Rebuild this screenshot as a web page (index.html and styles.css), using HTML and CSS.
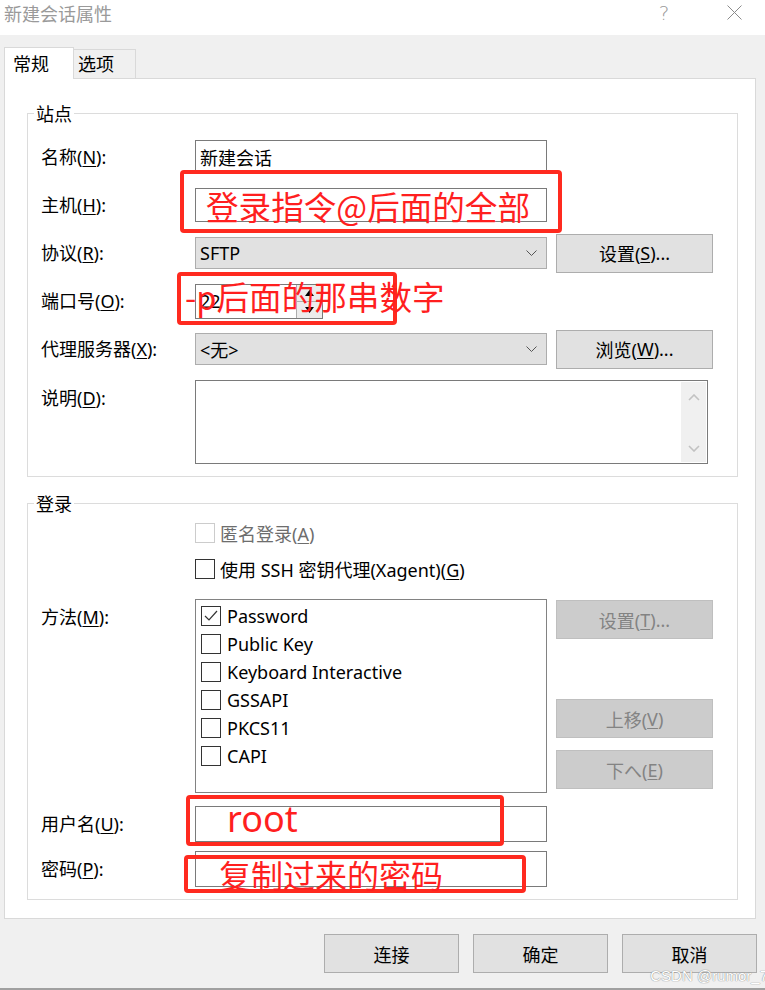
FILE: index.html
```html
<!DOCTYPE html>
<html lang="zh-CN">
<head>
<meta charset="utf-8">
<title>新建会话属性</title>
<link rel="stylesheet" href="styles.css">
</head>
<body>
<div class="window">
  <div class="titlebar">
    <span class="title">新建会话属性</span>
    <span class="help">?</span>
    <svg class="close" width="15" height="15" viewBox="0 0 15 15"><path d="M0.5 0.5 L14.5 14.5 M14.5 0.5 L0.5 14.5" stroke="#8a8a8a" stroke-width="1" fill="none"/></svg>
  </div>

  <div class="tabs">
    <div class="tab active">常规</div>
    <div class="tab">选项</div>
  </div>

  <div class="panel">
    <fieldset class="group">
      <legend>站点</legend>
      <div class="group-body site">
        <div class="row">
          <span class="label">名称(<u>N</u>):</span>
          <div class="field">新建会话</div>
        </div>
        <div class="row">
          <span class="label">主机(<u>H</u>):</span>
          <div class="field"></div>
        </div>
        <div class="row">
          <span class="label">协议(<u>R</u>):</span>
          <div class="select"><span>SFTP</span><svg class="chev" width="11" height="6" viewBox="0 0 11 6"><path d="M0.5 0.5 L5.5 5.5 L10.5 0.5" stroke="#555" fill="none"/></svg></div>
          <div class="btn">设置(<u>S</u>)...</div>
        </div>
        <div class="row">
          <span class="label">端口号(<u>O</u>):</span>
          <div class="spin">
            <span class="spin-val">22</span>
            <div class="spin-btns">
              <div class="spin-up"><svg width="9" height="6" viewBox="0 0 9 6"><path d="M0 6 L4.5 0 L9 6 Z" fill="#000"/></svg></div>
              <div class="spin-down"><svg width="9" height="6" viewBox="0 0 9 6"><path d="M0 0 L4.5 6 L9 0 Z" fill="#000"/></svg></div>
            </div>
          </div>
        </div>
        <div class="row">
          <span class="label">代理服务器(<u>X</u>):</span>
          <div class="select"><span>&lt;无&gt;</span><svg class="chev" width="11" height="6" viewBox="0 0 11 6"><path d="M0.5 0.5 L5.5 5.5 L10.5 0.5" stroke="#555" fill="none"/></svg></div>
          <div class="btn">浏览(<u>W</u>)...</div>
        </div>
        <div class="row top desc-row">
          <span class="label top-label">说明(<u>D</u>):</span>
          <div class="textarea">
            <div class="vscroll">
              <svg width="12" height="7" viewBox="0 0 12 7"><path d="M1 6 L6 1 L11 6" stroke="#c2c2c2" stroke-width="1.6" fill="none"/></svg>
              <svg width="12" height="7" viewBox="0 0 12 7"><path d="M1 1 L6 6 L11 1" stroke="#c2c2c2" stroke-width="1.6" fill="none"/></svg>
            </div>
          </div>
        </div>
      </div>
    </fieldset>

    <fieldset class="group login">
      <legend>登录</legend>
      <div class="group-body">
        <div class="check-row disabled">
          <span class="box"></span><span class="check-text">匿名登录(<u>A</u>)</span>
        </div>
        <div class="check-row">
          <span class="box"></span><span class="check-text">使用 SSH 密钥代理(Xagent)(<u>G</u>)</span>
        </div>
        <div class="row top methods">
          <span class="label top-label">方法(<u>M</u>):</span>
          <div class="listbox">
            <div class="item"><span class="box"><svg width="18" height="18" viewBox="0 0 18 18"><path d="M3 9 L7 13 L15 4" stroke="#333" stroke-width="1.2" fill="none"/></svg></span><span>Password</span></div>
            <div class="item"><span class="box"></span><span>Public Key</span></div>
            <div class="item"><span class="box"></span><span>Keyboard Interactive</span></div>
            <div class="item"><span class="box"></span><span>GSSAPI</span></div>
            <div class="item"><span class="box"></span><span>PKCS11</span></div>
            <div class="item"><span class="box"></span><span>CAPI</span></div>
          </div>
          <div class="btn-col">
            <div class="btn off b1">设置(<u>T</u>)...</div>
            <div class="btn off b2">上移(<u>V</u>)</div>
            <div class="btn off b3">下へ(<u>E</u>)</div>
          </div>
        </div>
        <div class="row cred user">
          <span class="label">用户名(<u>U</u>):</span>
          <div class="field tall"></div>
        </div>
        <div class="row cred pass">
          <span class="label">密码(<u>P</u>):</span>
          <div class="field tall"></div>
        </div>
      </div>
    </fieldset>
  </div>

  <div class="footer">
    <div class="btn fbtn">连接</div>
    <div class="btn fbtn">确定</div>
    <div class="btn fbtn">取消</div>
  </div>

  <div class="note-box nb1"></div>
  <div class="note-text nt1">登录指令@后面的全部</div>
  <div class="note-box nb2"></div>
  <div class="note-text nt2">-p后面的那串数字</div>
  <div class="note-box nb3"></div>
  <div class="note-text nt3">root</div>
  <div class="note-box nb4"></div>
  <div class="note-text nt4">复制过来的密码</div>

  <div class="watermark">CSDN @rumor_7</div>
</div>
</body>
</html>
```

FILE: styles.css
```css
html, body {
  margin: 0;
  padding: 0;
}
body {
  background: #f0f0f0;
  font-family: "Noto Sans", "Noto Sans CJK SC", sans-serif;
  font-size: 18px;
  color: #000;
}
u {
  text-decoration-thickness: 1px;
  text-underline-offset: 2px;
}
.window {
  position: relative;
  width: 765px;
  height: 990px;
  box-sizing: border-box;
  border-bottom: 2px solid #a0a0a0;
  overflow: hidden;
  display: flex;
  flex-direction: column;
}

/* title bar */
.titlebar {
  height: 35px;
  flex: none;
  background: #fff;
  display: flex;
  align-items: flex-start;
  padding-left: 4px;
  color: #9a9a9a;
}
.title {
  flex: 1;
  line-height: 26px;
  font-family: "Noto Sans CJK SC", sans-serif;
}
.help {
  width: 12px;
  text-align: center;
  margin-right: 57px;
  font-size: 20px;
  line-height: 26px;
  color: #9a9a9a;
  font-family: "DejaVu Sans", sans-serif;
  font-weight: 200;
}
.close {
  margin-right: 23px;
  margin-top: 5px;
}

/* tabs */
.tabs {
  flex: none;
  display: flex;
  align-items: flex-end;
  margin-top: 12px;
  padding-left: 4px;
  font-family: "Noto Sans CJK SC", sans-serif;
}
.tab {
  box-sizing: border-box;
  border: 1px solid #d9d9d9;
  border-bottom: none;
}
.tab.active {
  width: 70px;
  height: 32px;
  line-height: 30px;
  padding-left: 8px;
  background: #fff;
  margin-bottom: -1px;
  position: relative;
  z-index: 1;
}
.tab:not(.active) {
  width: 62px;
  height: 29px;
  line-height: 27px;
  padding-left: 4px;
  border-left: none;
  background: #f0f0f0;
}

/* panel */
.panel {
  flex: none;
  margin-left: 4px;
  width: 752px;
  height: 841px;
  box-sizing: border-box;
  background: #fff;
  border: 1px solid #d9d9d9;
  padding-top: 22px;
}
.group {
  margin: 0 0 0 22px;
  width: 711px;
  box-sizing: border-box;
  border: 1px solid #dcdcdc;
  padding: 0;
  min-width: 0;
}
.group legend {
  margin-left: 6px;
  padding: 0 2px;
  line-height: 24px;
  font-family: "Noto Sans CJK SC", sans-serif;
}
.group.login {
  margin-top: 14px;
}
.group-body {
  padding: 0 0 12px 13px;
}
.group-body.site {
  padding-top: 8px;
}

.row {
  display: flex;
  align-items: center;
  height: 48px;
}
.row.top {
  align-items: flex-start;
  height: auto;
}
.label {
  flex: none;
  width: 154px;
  line-height: 24px;
}
.top-label {
  margin-top: 6px;
}
.desc-row {
  margin-top: 7px;
}

.field {
  box-sizing: border-box;
  width: 352px;
  height: 34px;
  border: 1px solid #7a7a7a;
  background: #fff;
  padding-left: 4px;
  display: flex;
  align-items: center;
  font-family: "Noto Sans CJK SC", sans-serif;
}
.field.tall {
  height: 36px;
}
.select {
  box-sizing: border-box;
  width: 352px;
  height: 32px;
  border: 1px solid #adadad;
  background: #e1e1e1;
  padding: 0 9px 0 4px;
  display: flex;
  align-items: center;
  justify-content: space-between;
}
.chev {
  display: block;
}
.btn {
  box-sizing: border-box;
  flex: none;
  width: 157px;
  height: 39px;
  margin-left: 9px;
  border: 1px solid #adadad;
  background: #e1e1e1;
  display: flex;
  align-items: center;
  justify-content: center;
}

.spin {
  box-sizing: border-box;
  width: 128px;
  height: 35px;
  border: 1px solid #7a7a7a;
  background: #fff;
  display: flex;
}
.spin-val {
  flex: 1;
  padding-left: 4px;
  line-height: 33px;
}
.spin-btns {
  width: 25px;
  display: flex;
  flex-direction: column;
  border-left: 1px solid #adadad;
}
.spin-up, .spin-down {
  flex: 1;
  background: #ececec;
  display: flex;
  align-items: center;
  justify-content: center;
}
.spin-up {
  border-bottom: 1px solid #adadad;
}

.textarea {
  box-sizing: border-box;
  width: 513px;
  height: 84px;
  border: 1px solid #7a7a7a;
  background: #fff;
  padding: 1px;
  display: flex;
  justify-content: flex-end;
}
.vscroll {
  width: 25px;
  background: #f0f0f0;
  display: flex;
  flex-direction: column;
  justify-content: space-between;
  align-items: center;
  padding: 12px 0 10px;
  box-sizing: border-box;
}

/* login */
.check-row {
  display: flex;
  align-items: center;
  height: 36px;
  padding-left: 154px;
}
.box {
  box-sizing: border-box;
  flex: none;
  width: 20px;
  height: 20px;
  border: 1px solid #333;
  background: #fff;
  display: flex;
  align-items: center;
  justify-content: center;
}
.check-text {
  margin-left: 5px;
}
.check-row.disabled .box {
  border-color: #cccccc;
}
.check-row.disabled .check-text {
  color: #6d6d6d;
}
.methods {
  margin-top: 12px;
}
.listbox {
  box-sizing: border-box;
  width: 352px;
  height: 194px;
  border: 1px solid #828282;
  background: #fff;
  padding-top: 2px;
}
.item {
  height: 28px;
  display: flex;
  align-items: center;
  padding-left: 5px;
}
.item .box {
  margin-right: 6px;
}
.btn-col {
  display: flex;
  flex-direction: column;
}
.btn.off {
  background: #cccccc;
  border-color: #bfbfbf;
  color: #838383;
}
.b1 { margin-top: 1px; }
.b2 { margin-top: 60px; }
.b3 { margin-top: 12px; }
.cred {
  height: 36px;
}
.user {
  margin-top: 13px;
}
.pass {
  margin-top: 9px;
}

/* footer */
.footer {
  flex: none;
  display: flex;
  justify-content: flex-end;
  gap: 14px;
  padding-right: 8px;
  margin-top: 15px;
}
.fbtn {
  width: 135px;
  margin-left: 0;
  font-family: "Noto Sans CJK SC", sans-serif;
}

/* red annotations (overlay) */
.note-box {
  position: absolute;
  box-sizing: border-box;
  border: 4px solid #ff2a1f;
  border-radius: 4px;
}
.nb1 { left: 180px; top: 170px; width: 382px; height: 63px; }
.nb2 { left: 177px; top: 272px; width: 220px; height: 53px; }
.nb3 { left: 186px; top: 795px; width: 318px; height: 51px; }
.nb4 { left: 184px; top: 855px; width: 342px; height: 38px; }
.note-text {
  position: absolute;
  color: #ff1f1f;
  font-family: "Noto Sans CJK SC", sans-serif;
  font-size: 32px;
  line-height: 32px;
  white-space: nowrap;
}
.nt1 { left: 206px; top: 190px; font-size: 32.6px; }
.nt2 { left: 185px; top: 280px; font-size: 32.6px; }
.nt3 { left: 227px; top: 801px; font-size: 36px; line-height: 36px; font-family: "Noto Sans", sans-serif; }
.nt4 { left: 219px; top: 858px; }

.watermark {
  position: absolute;
  right: -3px;
  bottom: 4px;
  font-family: "Liberation Sans", sans-serif;
  font-size: 15px;
  line-height: 16px;
  color: #ffffff;
  text-shadow: 0 0 1px #8c8c8c, 0 0 1px #8c8c8c;
}
```
